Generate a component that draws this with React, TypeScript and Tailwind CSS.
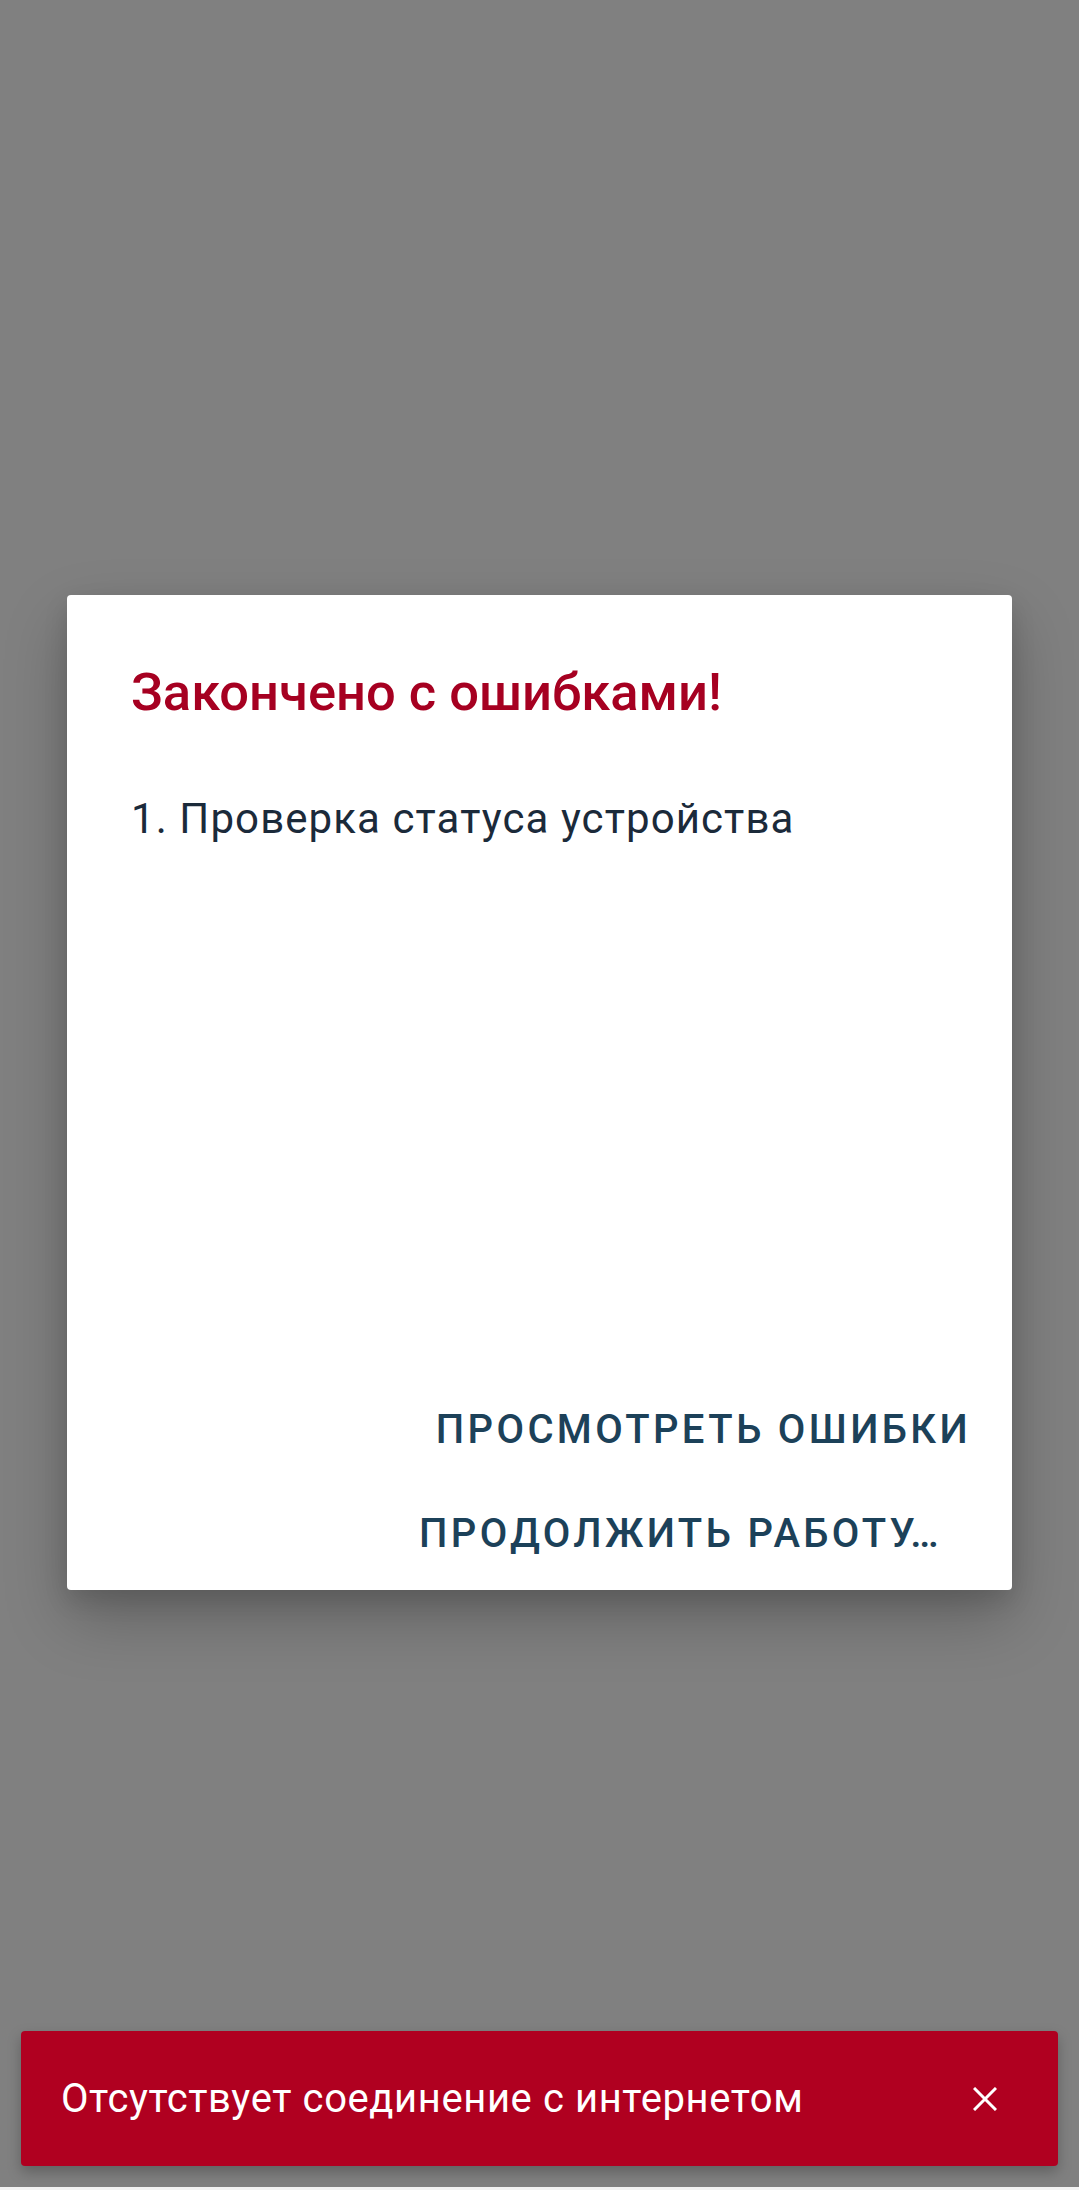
export default function App() {
  return (
    <div
      className="relative flex h-[2190px] w-[1079px] flex-col overflow-hidden bg-[#808080]"
      style={{ fontFamily: 'Roboto, "Noto Sans", sans-serif' }}
    >
      {/* dialog */}
      <div className="mx-[67px] mt-[595px] flex h-[995px] flex-col rounded-[4px] bg-white shadow-[0_28px_64px_rgba(0,0,0,0.24),0_10px_24px_rgba(0,0,0,0.12)]">
        <div className="px-[64px] pt-[65px]">
          <h2 className="text-[52.5px] leading-[64px] font-medium text-[#a60021]">
            Закончено с ошибками!
          </h2>
          <p className="mt-[67px] text-[42px] leading-[56px] tracking-[0.026em] text-[#1b2a3a]">
            1. Проверка статуса устройства
          </p>
        </div>
        <div className="flex-1" />
        <div className="flex flex-col items-end gap-[56px] pr-[41px] pb-[32px]">
          <button className="text-[40px] leading-[48px] font-medium tracking-[0.084em] text-[#1c4159]">
            ПРОСМОТРЕТЬ ОШИБКИ
          </button>
          <button className="mr-[29px] text-[40px] leading-[48px] font-medium tracking-[0.084em] text-[#1c4159]">
            ПРОДОЛЖИТЬ РАБОТУ…
          </button>
        </div>
      </div>

      {/* snackbar */}
      <div className="mx-[21px] mt-[441px] flex h-[135px] items-center justify-between rounded-[4px] bg-[#b00020] pr-[61px] pl-[40px] shadow-[0_6px_14px_rgba(0,0,0,0.25)]">
        <span className="text-[40px] leading-[48px] tracking-[0.015em] text-white">
          Отсутствует соединение с интернетом
        </span>
        <svg width="24" height="24" viewBox="0 0 24 24" className="text-white">
          <path d="M1 1L23 23M23 1L1 23" stroke="currentColor" strokeWidth="3" fill="none" />
        </svg>
      </div>
      <div className="flex-1" />
      <div className="h-[3px] bg-[#f2f2f2]" />
    </div>
  )
}
